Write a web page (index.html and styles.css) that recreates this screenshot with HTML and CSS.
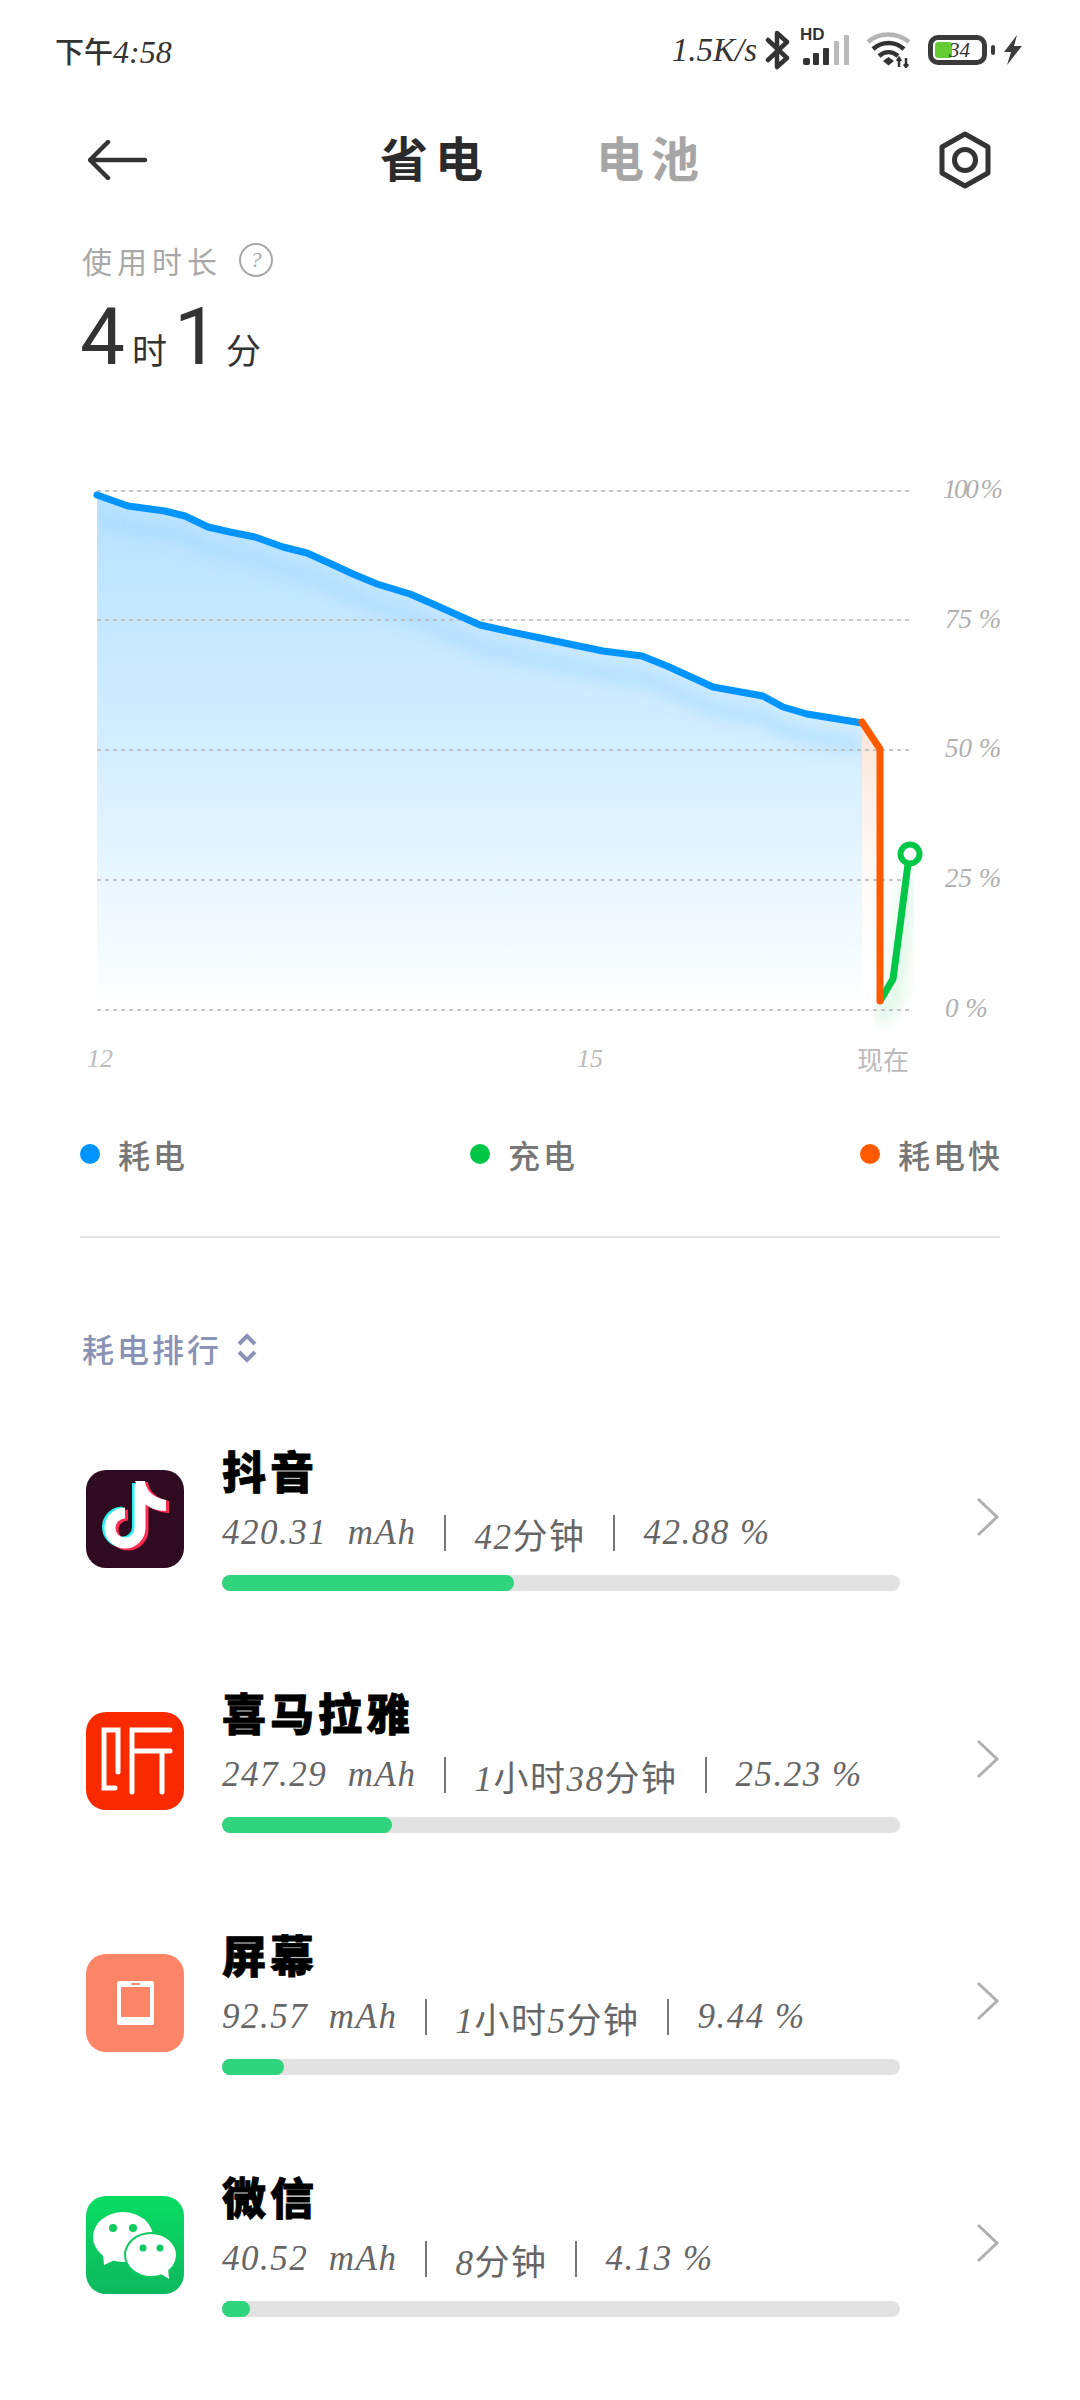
FILE: index.html
```html
<!DOCTYPE html>
<html lang="zh">
<head>
    <meta charset="UTF-8">
    <meta name="viewport" content="width=device-width, initial-scale=1.0">
    <title>省电</title>
    <link rel="stylesheet" href="styles.css">
</head>
<body>
    <!-- Status bar -->
    <div class="status-bar">
        <span class="clock"><span class="han">下午</span>4:58</span>
        <div class="status-right">
            <span class="speed">1.5K/s</span>
            <svg class="ic-bt" width="26" height="40" viewBox="0 0 26 40">
                <path d="M3 10 L22 28 L12 37 V3 L22 12 L3 30" fill="none" stroke="#333" stroke-width="4.5" stroke-linejoin="round" stroke-linecap="round"/>
            </svg>
            <div class="signal">
                <span class="hd">HD</span>
                <svg width="50" height="32" viewBox="0 0 50 32">
                    <rect x="0" y="24" width="7" height="7" rx="2" fill="#333"/>
                    <rect x="10" y="19" width="6" height="12" rx="1" fill="#333"/>
                    <rect x="20" y="14" width="6" height="17" rx="1" fill="#333"/>
                    <rect x="31" y="7" width="5" height="24" rx="1" fill="#b9b9b9"/>
                    <rect x="41" y="1" width="5" height="30" rx="1" fill="#b9b9b9"/>
                </svg>
            </div>
            <svg class="ic-wifi" width="48" height="36" viewBox="0 0 48 36">
                <path d="M3 10 C14 0 32 0 44 10" fill="none" stroke="#b5b5b5" stroke-width="4.5"/>
                <path d="M8 17 C17 9 30 9 39 17" fill="none" stroke="#333" stroke-width="4.5"/>
                <path d="M14 24 C20 19 27 19 33 24" fill="none" stroke="#333" stroke-width="4.5"/>
                <path d="M18 29 L23.500 25 L29 29 L23.500 33.500 Z" fill="#333"/>
                <path d="M34 35 V27 M32 29 L34 26 L36 29 M41 26 V34 M39 32 L41 35 L43 32" fill="none" stroke="#333" stroke-width="2.500"/>
            </svg>
            <div class="battery">
                <div class="battery-body">
                    <div class="battery-level"></div>
                    <span class="battery-num">34</span>
                </div>
                <div class="battery-nub"></div>
            </div>
            <svg class="ic-bolt" width="20" height="30" viewBox="0 0 20 30">
                <path d="M14 0 L1 17 H8 L4 30 L19 11 H11 Z" fill="#3c3c3c"/>
            </svg>
        </div>
    </div>

    <!-- Header -->
    <div class="nav">
        <svg width="60" height="40" viewBox="0 0 60 40">
            <path d="M57 20 H3 M20 2 L2 20 L20 38" fill="none" stroke="#333" stroke-width="4.500" stroke-linecap="round" stroke-linejoin="round"/>
        </svg>
        <div class="tabs">
            <span class="tab active">省电</span>
            <span class="tab">电池</span>
        </div>
        <svg width="54" height="58" viewBox="0 0 54 58">
            <path d="M27 3 L50 16 V42 L27 55 L4 42 V16 Z" fill="none" stroke="#333" stroke-width="5" stroke-linejoin="round"/>
            <circle cx="27" cy="29" r="10.500" fill="none" stroke="#333" stroke-width="5"/>
        </svg>
    </div>

    <!-- Usage time -->
    <div class="usage">
        <div class="usage-label">
            <span>使用时长</span>
            <span class="help">?</span>
        </div>
        <div class="usage-time">
            <span class="num">4</span><span class="unit">时</span><span class="num num-one">1</span><span class="unit">分</span>
        </div>
    </div>

    <!-- Chart -->
    <svg class="chart" width="1080" height="570" viewBox="0 470 1080 570">
        <defs>
            <linearGradient id="areaFill" x1="0" y1="0" x2="0" y2="1">
                <stop offset="0" stop-color="#b8e2ff"/>
                <stop offset="0.5" stop-color="#d4eeff"/>
                <stop offset="1" stop-color="#ffffff"/>
            </linearGradient>
            <linearGradient id="orangeFill" x1="0" y1="0" x2="0" y2="1">
                <stop offset="0" stop-color="#fae4d6"/>
                <stop offset="1" stop-color="#ffffff" stop-opacity="0"/>
            </linearGradient>
            <filter id="soft" x="-20%" y="-20%" width="140%" height="140%">
                <feGaussianBlur stdDeviation="7"/>
            </filter>
            <clipPath id="areaClip">
                <path d="M97 496 L128 507 L165 512 L185 517 L208 528 L230 533 L255 538 L283 548 L307 554 L327 563 L353 575 L377 585 L410 595 L433 605 L453 614 L480 626 L507 632 L550 641 L603 652 L642 657 L667 667 L713 688 L763 697 L783 708 L807 715 L862 724 V1011 H97 Z"/>
            </clipPath>
        </defs>
        <path d="M97 496 L128 507 L165 512 L185 517 L208 528 L230 533 L255 538 L283 548 L307 554 L327 563 L353 575 L377 585 L410 595 L433 605 L453 614 L480 626 L507 632 L550 641 L603 652 L642 657 L667 667 L713 688 L763 697 L783 708 L807 715 L862 724 V1011 H97 Z" fill="url(#areaFill)"/>
        <g clip-path="url(#areaClip)">
            <path d="M97 518 L128 529 L165 534 L185 539 L208 550 L230 555 L255 560 L283 570 L307 576 L327 585 L353 597 L377 607 L410 617 L433 627 L453 636 L480 648 L507 654 L550 663 L603 674 L642 679 L667 689 L713 710 L763 719 L783 730 L807 737 L862 746" fill="none" stroke="#a5daff" stroke-width="16" opacity="0.55" filter="url(#soft)"/>
        </g>
        <path d="M862 724 L880 750 V1005 H862 Z" fill="url(#orangeFill)"/>
        <path d="M880 1010 L895 985 L902 930 L908 870" fill="none" stroke="#c9f0d6" stroke-width="16" opacity="0.6" filter="url(#soft)" transform="translate(0 12)"/>
        <g class="grid-lines">
            <line x1="97" y1="492" x2="913" y2="492"/>
            <line x1="97" y1="621" x2="913" y2="621"/>
            <line x1="97" y1="751" x2="913" y2="751"/>
            <line x1="97" y1="881" x2="913" y2="881"/>
            <line x1="97" y1="1011" x2="913" y2="1011"/>
        </g>
        <path d="M97 496 L128 507 L165 512 L185 517 L208 528 L230 533 L255 538 L283 548 L307 554 L327 563 L353 575 L377 585 L410 595 L433 605 L453 614 L480 626 L507 632 L550 641 L603 652 L642 657 L667 667 L713 688 L763 697 L783 708 L807 715 L862 724" fill="none" stroke="#0094ff" stroke-width="7" stroke-linecap="round" stroke-linejoin="round"/>
        <path d="M880 1002 L893 980 L900 927 L908 865" fill="none" stroke="#00c846" stroke-width="7" stroke-linejoin="round"/>
        <path d="M862 723 L880 750 V1002" fill="none" stroke="#ff5a00" stroke-width="7" stroke-linecap="round" stroke-linejoin="round"/>
        <circle cx="910" cy="855" r="9.500" fill="#fff" stroke="#00c846" stroke-width="6"/>
        <g class="axis-y">
            <text x="943" y="499" textLength="60">100 %</text>
            <text x="945" y="629">75 %</text>
            <text x="945" y="758">50 %</text>
            <text x="945" y="888">25 %</text>
            <text x="945" y="1018">0 %</text>
        </g>
    </svg>
    <div class="axis-x">
        <span class="tick">12</span>
        <span class="tick">15</span>
        <span class="tick han">现在</span>
    </div>

    <!-- Legend -->
    <div class="legend">
        <div class="legend-item"><span class="dot dot-blue"></span>耗电</div>
        <div class="legend-item"><span class="dot dot-green"></span>充电</div>
        <div class="legend-item"><span class="dot dot-orange"></span>耗电快</div>
    </div>
    <div class="divider"></div>

    <div class="rank-title">
        <span>耗电排行</span>
        <svg width="22" height="30" viewBox="0 0 22 30">
            <path d="M3 11 L11 3 L19 11 M3 19 L11 27 L19 19" fill="none" stroke="#8a93b5" stroke-width="4"/>
        </svg>
    </div>

    <!-- App list -->
    <div class="app-list">
        <div class="app-row">
            <svg class="app-icon" width="98" height="98" viewBox="0 0 98 98">
                <rect width="98" height="98" rx="20" fill="#2e0b20"/>
                <g fill="none" stroke-width="11">
                    <path d="M51.500 13 V57 A15 15 0 1 1 36.500 42" stroke="#25f4ee"/>
                    <path d="M57 16 V60 A15 15 0 1 1 42 45" stroke="#fe2c55"/>
                    <path d="M54 14 V58 A15 15 0 1 1 39 43" stroke="#fff"/>
                </g>
                <path d="M56 12 H62 C63 22 72 29 83 31 V43 C74 43 66 39 60 35 Z" fill="#fe2c55"/>
                <path d="M49 11 H59 C60 21 68 28 80 30 V41 C71 41 64 38 59 34 Z" fill="#fff"/>
            </svg>
            <div class="app-info">
                <div class="app-name">抖音</div>
                <div class="app-stats">
                    <span>420.31&nbsp; mAh</span><i class="sep"></i><span>42<span class="han">分钟</span></span><i class="sep"></i><span>42.88 %</span>
                </div>
                <div class="bar"><div class="bar-fill" style="width: 292px"></div></div>
            </div>
            <svg class="chevron" width="24" height="40" viewBox="0 0 24 40">
                <path d="M2 2 L21 20 L2 38" fill="none" stroke="#b0b0b0" stroke-width="3"/>
            </svg>
        </div>

        <div class="app-row">
            <svg class="app-icon" width="98" height="98" viewBox="0 0 98 98">
                <rect width="98" height="98" rx="20" fill="#f92a00"/>
                <path d="M32 60 V18 H18 V76 H29 M46 80 V18 H84 M46 39 H84 M76 39 V80" fill="none" stroke="#fff" stroke-width="5" stroke-linecap="round"/>
            </svg>
            <div class="app-info">
                <div class="app-name">喜马拉雅</div>
                <div class="app-stats">
                    <span>247.29&nbsp; mAh</span><i class="sep"></i><span>1<span class="han">小时</span>38<span class="han">分钟</span></span><i class="sep"></i><span>25.23 %</span>
                </div>
                <div class="bar"><div class="bar-fill" style="width: 170px"></div></div>
            </div>
            <svg class="chevron" width="24" height="40" viewBox="0 0 24 40">
                <path d="M2 2 L21 20 L2 38" fill="none" stroke="#b0b0b0" stroke-width="3"/>
            </svg>
        </div>

        <div class="app-row">
            <svg class="app-icon" width="98" height="98" viewBox="0 0 98 98">
                <rect width="98" height="98" rx="20" fill="#fb8566"/>
                <rect x="31" y="27" width="37" height="44" rx="2" fill="#fff"/>
                <rect x="35" y="33" width="29" height="30" fill="#fb8566"/>
                <rect x="45" y="29" width="9" height="2" rx="1" fill="#fb8566"/>
            </svg>
            <div class="app-info">
                <div class="app-name">屏幕</div>
                <div class="app-stats">
                    <span>92.57&nbsp; mAh</span><i class="sep"></i><span>1<span class="han">小时</span>5<span class="han">分钟</span></span><i class="sep"></i><span>9.44 %</span>
                </div>
                <div class="bar"><div class="bar-fill" style="width: 62px"></div></div>
            </div>
            <svg class="chevron" width="24" height="40" viewBox="0 0 24 40">
                <path d="M2 2 L21 20 L2 38" fill="none" stroke="#b0b0b0" stroke-width="3"/>
            </svg>
        </div>

        <div class="app-row">
            <svg class="app-icon" width="98" height="98" viewBox="0 0 98 98">
                <defs>
                    <linearGradient id="wechatBg" x1="0" y1="0" x2="0" y2="1">
                        <stop offset="0" stop-color="#08dd62"/>
                        <stop offset="1" stop-color="#0eb85e"/>
                    </linearGradient>
                </defs>
                <rect width="98" height="98" rx="20" fill="url(#wechatBg)"/>
                <ellipse cx="37" cy="41" rx="30" ry="25" fill="#fff"/>
                <path d="M17 58 L18 69 L31 63 Z" fill="#fff"/>
                <ellipse cx="65" cy="59" rx="27" ry="23" fill="#0dc95f"/>
                <ellipse cx="65" cy="59" rx="25" ry="21" fill="#fff"/>
                <path d="M72 76 L83 83 L82 72 Z" fill="#fff"/>
                <circle cx="27" cy="32" r="4" fill="#0ccb5f"/>
                <circle cx="47" cy="32" r="4" fill="#0ccb5f"/>
                <circle cx="57" cy="52" r="3.500" fill="#0dc95f"/>
                <circle cx="74" cy="52" r="3.500" fill="#0dc95f"/>
            </svg>
            <div class="app-info">
                <div class="app-name">微信</div>
                <div class="app-stats">
                    <span>40.52&nbsp; mAh</span><i class="sep"></i><span>8<span class="han">分钟</span></span><i class="sep"></i><span>4.13 %</span>
                </div>
                <div class="bar"><div class="bar-fill" style="width: 28px"></div></div>
            </div>
            <svg class="chevron" width="24" height="40" viewBox="0 0 24 40">
                <path d="M2 2 L21 20 L2 38" fill="none" stroke="#b0b0b0" stroke-width="3"/>
            </svg>
        </div>
    </div>
</body>
</html>
```
FILE: styles.css
```css
body {
    font-family: "Noto Sans CJK SC", sans-serif;
    background: #ffffff;
    margin: 0;
    color: #333333;
    height: 2400px;
    overflow: hidden;
}
svg {
    display: block;
}
.han {
    font-family: "Noto Sans CJK SC", sans-serif;
    font-style: normal;
}
.status-bar {
    display: flex;
    justify-content: space-between;
    align-items: center;
    height: 100px;
    padding: 0 57px 0 55px;
}
.clock {
    font-family: "Liberation Serif", "Noto Sans CJK SC", sans-serif;
    font-size: 32px;
    font-style: italic;
}
.clock .han {
    font-size: 29px;
    font-weight: 500;
}
.status-right {
    display: flex;
    align-items: center;
}
.speed {
    font-family: "Liberation Serif", sans-serif;
    font-size: 33px;
    font-style: italic;
    margin-right: 8px;
}
.signal {
    position: relative;
    margin-left: 12px;
}
.signal svg {
    margin: 4px 0;
}
.hd {
    position: absolute;
    left: -3px;
    top: -3px;
    font-family: "Liberation Sans", sans-serif;
    font-size: 17px;
    font-weight: 700;
    line-height: 16px;
}
.ic-wifi {
    margin-left: 12px;
}
.battery {
    display: flex;
    align-items: center;
    margin-left: 15px;
}
.battery-body {
    display: flex;
    align-items: center;
    position: relative;
    width: 59px;
    height: 30px;
    box-sizing: border-box;
    border: 5px solid #3a3a3a;
    border-radius: 10px;
    padding-left: 2px;
}
.battery-level {
    width: 17px;
    height: 16px;
    background: #66cc33;
    border-radius: 3px;
}
.battery-num {
    font-family: "Liberation Serif", sans-serif;
    font-size: 21px;
    font-style: italic;
    margin-left: -3px;
}
.battery-nub {
    width: 4px;
    height: 10px;
    background: #3a3a3a;
    border-radius: 2px;
    margin-left: 4px;
}
.ic-bolt {
    margin-left: 8px;
}
.nav {
    display: flex;
    justify-content: space-between;
    align-items: center;
    height: 120px;
    padding: 0 88px;
}
.tabs {
    display: flex;
    gap: 106px;
    margin: 0 0 8px 0;
}
.tab {
    font-size: 48px;
    font-weight: 700;
    letter-spacing: 7px;
    color: #a6a6a6;
    line-height: 60px;
}
.tab.active {
    color: #2b2b2b;
}
.usage {
    padding: 20px 82px 0;
}
.usage-label {
    display: flex;
    align-items: center;
    height: 40px;
    font-size: 30px;
    letter-spacing: 5px;
    color: #a8a8a8;
}
.help {
    width: 30px;
    height: 30px;
    border: 2px solid #a8a8a8;
    border-radius: 50%;
    margin-left: 17px;
    font-family: "Liberation Serif", sans-serif;
    font-size: 22px;
    font-style: italic;
    letter-spacing: 0;
    line-height: 30px;
    text-align: center;
}
.usage-time {
    display: flex;
    align-items: baseline;
    height: 81px;
    margin: 9px 0 0 -2px;
    line-height: 96px;
}
.num {
    font-family: Roboto, sans-serif;
    font-size: 80px;
}
.num-one {
    margin-left: 7px;
}
.unit {
    font-size: 35px;
    margin-left: 7px;
}
.chart {
    margin-top: 99px;
}
.grid-lines line {
    stroke: #b4b4b4;
    stroke-width: 1.5;
    stroke-dasharray: 4 4;
}
.axis-y text {
    font-family: "Liberation Serif", sans-serif;
    font-size: 27px;
    font-style: italic;
    fill: #b0b0b0;
}
.axis-x {
    display: grid;
    grid-template-columns: 490px 280px auto;
    padding-left: 87px;
    height: 50px;
    line-height: 40px;
}
.tick {
    font-family: "Liberation Serif", "Noto Sans CJK SC", sans-serif;
    font-size: 26px;
    font-style: italic;
    color: #bbbbbb;
}
.tick.han {
    font-family: "Noto Sans CJK SC", sans-serif;
    font-style: normal;
}
.legend {
    display: grid;
    grid-template-columns: 390px 390px auto;
    padding-left: 80px;
    margin-top: 45px;
}
.legend-item {
    display: flex;
    align-items: center;
    height: 40px;
    font-size: 32px;
    font-weight: 500;
    letter-spacing: 3px;
    color: #777777;
}
.dot {
    width: 20px;
    height: 20px;
    border-radius: 50%;
    margin-right: 18px;
}
.dot-blue {
    background: #0094ff;
}
.dot-green {
    background: #00c846;
}
.dot-orange {
    background: #ff5a00;
}
.divider {
    height: 2px;
    background: #e4e4e4;
    margin: 62px 80px 0;
}
.rank-title {
    display: flex;
    align-items: center;
    gap: 14px;
    height: 40px;
    margin-top: 90px;
    padding-left: 82px;
    font-size: 32px;
    font-weight: 500;
    letter-spacing: 3px;
    color: #8a93b5;
}
.app-list {
    margin-top: 72px;
}
.app-row {
    display: flex;
    align-items: flex-start;
    height: 242px;
    padding-left: 86px;
}
.app-row:last-child {
    height: auto;
}
.app-icon {
    margin-top: 30px;
}
.app-info {
    width: 678px;
    margin-left: 38px;
}
.app-name {
    font-size: 44px;
    font-weight: 900;
    letter-spacing: 4px;
    line-height: 60px;
    color: #000000;
    -webkit-text-stroke: 0.8px #000000;
}
.app-stats {
    display: flex;
    align-items: center;
    gap: 28px;
    height: 66px;
    font-family: "Liberation Serif", "Noto Sans CJK SC", sans-serif;
    font-size: 35px;
    font-style: italic;
    letter-spacing: 1.5px;
    color: #666666;
}
.sep {
    width: 2px;
    height: 36px;
    background: #777777;
}
.bar {
    height: 16px;
    margin-top: 9px;
    background: #e2e2e2;
    border-radius: 8px;
}
.bar-fill {
    height: 100%;
    background: #30d47c;
    border-radius: 8px;
}
.chevron {
    margin: 57px 0 0 76px;
}
```
